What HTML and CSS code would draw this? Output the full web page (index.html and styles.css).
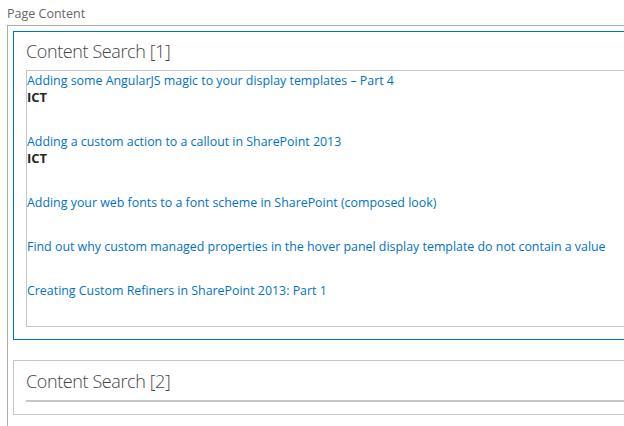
FILE: index.html
```html
<!DOCTYPE html>
<html>
<head>
<meta charset="utf-8">
<link rel="stylesheet" href="styles.css">
</head>
<body>
<div class="zone-label">Page Content</div>
<div class="zone">
  <div class="wp wp-selected">
    <h2 class="wp-title">Content Search [1]</h2>
    <div class="results">
      <div class="item">
        <a class="item-link" href="#">Adding some AngularJS magic to your display templates – Part 4</a>
        <div class="item-tag">ICT</div>
      </div>
      <div class="item">
        <a class="item-link" href="#">Adding a custom action to a callout in SharePoint 2013</a>
        <div class="item-tag">ICT</div>
      </div>
      <div class="item">
        <a class="item-link" href="#">Adding your web fonts to a font scheme in SharePoint (composed look)</a>
      </div>
      <div class="item">
        <a class="item-link" href="#">Find out why custom managed properties in the hover panel display template do not contain a value</a>
      </div>
      <div class="item">
        <a class="item-link" href="#">Creating Custom Refiners in SharePoint 2013: Part 1</a>
      </div>
    </div>
  </div>
  <div class="wp wp-plain">
    <h2 class="wp-title wp-title-under">Content Search [2]</h2>
  </div>
</div>
</body>
</html>
```
FILE: styles.css
```css
html, body {
  margin: 0;
  padding: 0;
  background: #fff;
  overflow: hidden;
}
body {
  font-family: "Open Sans", "Noto Sans", sans-serif;
  font-size: 13px;
  color: #333;
  width: 624px;
  height: 426px;
}
.zone-label {
  padding: 6px 0 0 7px;
  height: 19px;
  line-height: 16px;
  font-size: 12.5px;
  color: #666;
}
.zone {
  margin-left: 7px;
  border-top: 1px solid #ababab;
  border-left: 1px solid #ababab;
  padding: 5px 0 14px 5px;
  height: 402px;
  box-sizing: border-box;
}
.wp {
  padding: 0 0 12px 12px;
}
.wp-selected {
  border-top: 1px solid #0072c6;
  border-left: 1px solid #0072c6;
  border-bottom: 1px solid #0072c6;
}
.wp-plain {
  margin-top: 20px;
  border-top: 1px solid #c6c6c6;
  border-left: 1px solid #c6c6c6;
  border-bottom: 1px solid #c6c6c6;
}
.wp-title {
  margin: 0;
  padding: 6px 0 5px 0;
  font-weight: 300;
  font-size: 18px;
  letter-spacing: -0.4px;
  line-height: 27px;
  color: #444;
}
.wp-title-under {
  border-bottom: 2px solid #c6c6c6;
  padding-top: 7px;
  padding-bottom: 5px;
}
.results {
  border-top: 1px solid #c6c6c6;
  border-left: 1px solid #c6c6c6;
  border-bottom: 1px solid #c6c6c6;
  padding-top: 1px;
  font-size: 12.4px;
}
.item {
  margin-bottom: 27px;
  line-height: 17px;
}
.item-link {
  display: block;
  color: #0072c6;
  text-decoration: none;
  white-space: nowrap;
}
.item-tag {
  font-weight: bold;
  font-size: 13px;
  color: #262626;
}
```
